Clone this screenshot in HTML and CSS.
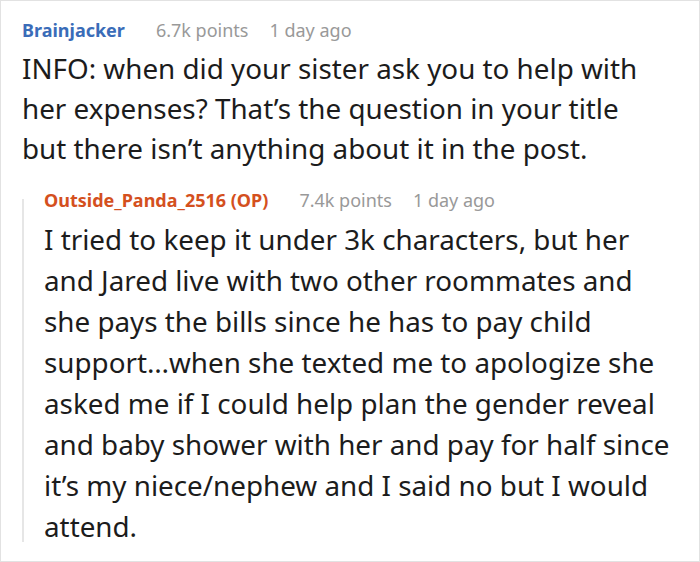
FILE: index.html
```html
<!DOCTYPE html>
<html>
<head>
<meta charset="utf-8">
<link rel="stylesheet" href="styles.css">
</head>
<body>
<div class="frame">
  <div class="comment">
    <div class="meta">
      <span class="author author-blue">Brainjacker</span>
      <span class="points">6.7k points</span>
      <span class="time">1 day ago</span>
    </div>
    <div class="body body-top">INFO: when did your sister ask you to help with her expenses? That’s the question in your title but there isn’t anything about it in the post.</div>
    <div class="comment child">
      <div class="meta">
        <span class="author author-op">Outside_Panda_2516 (OP)</span>
        <span class="points">7.4k points</span>
        <span class="time">1 day ago</span>
      </div>
      <div class="body body-child">I tried to keep it under 3k characters, but her and Jared live with two other roommates and she pays the bills since he has to pay child support…when she texted me to apologize she asked me if I could help plan the gender reveal and baby shower with her and pay for half since it’s my niece/nephew and I said no but I would attend.</div>
    </div>
  </div>
</div>
</body>
</html>
```
FILE: styles.css
```css
html, body {
  margin: 0;
  padding: 0;
  background: #ffffff;
}
.frame {
  box-sizing: border-box;
  width: 700px;
  height: 562px;
  border: 1px solid #e2e2e2;
  padding: 15px 26px 0 21px;
  font-family: "Noto Sans", "Open Sans", sans-serif;
  color: #1c1c1c;
  overflow: hidden;
}
.meta {
  display: flex;
  align-items: center;
  height: 28px;
  font-size: 18px;
  color: #999999;
}
.author {
  font-weight: bold;
  margin-right: 31px;
}
.author-blue {
  color: #3a6cb8;
}
.author-op {
  color: #d4501e;
}
.points {
  margin-right: 21px;
}
.body {
  margin-top: 4px;
  font-size: 27.8px;
  line-height: 40.2px;
}
.body-top {
  padding-right: 12px;
}
.body-child {
  margin-top: 5px;
  line-height: 41px;
}
.child {
  position: relative;
  margin-top: 17px;
  padding-left: 22px;
}
.child::before {
  content: "";
  position: absolute;
  left: 0;
  top: 13px;
  bottom: 5px;
  width: 2px;
  background: #e6e6e6;
}
```
